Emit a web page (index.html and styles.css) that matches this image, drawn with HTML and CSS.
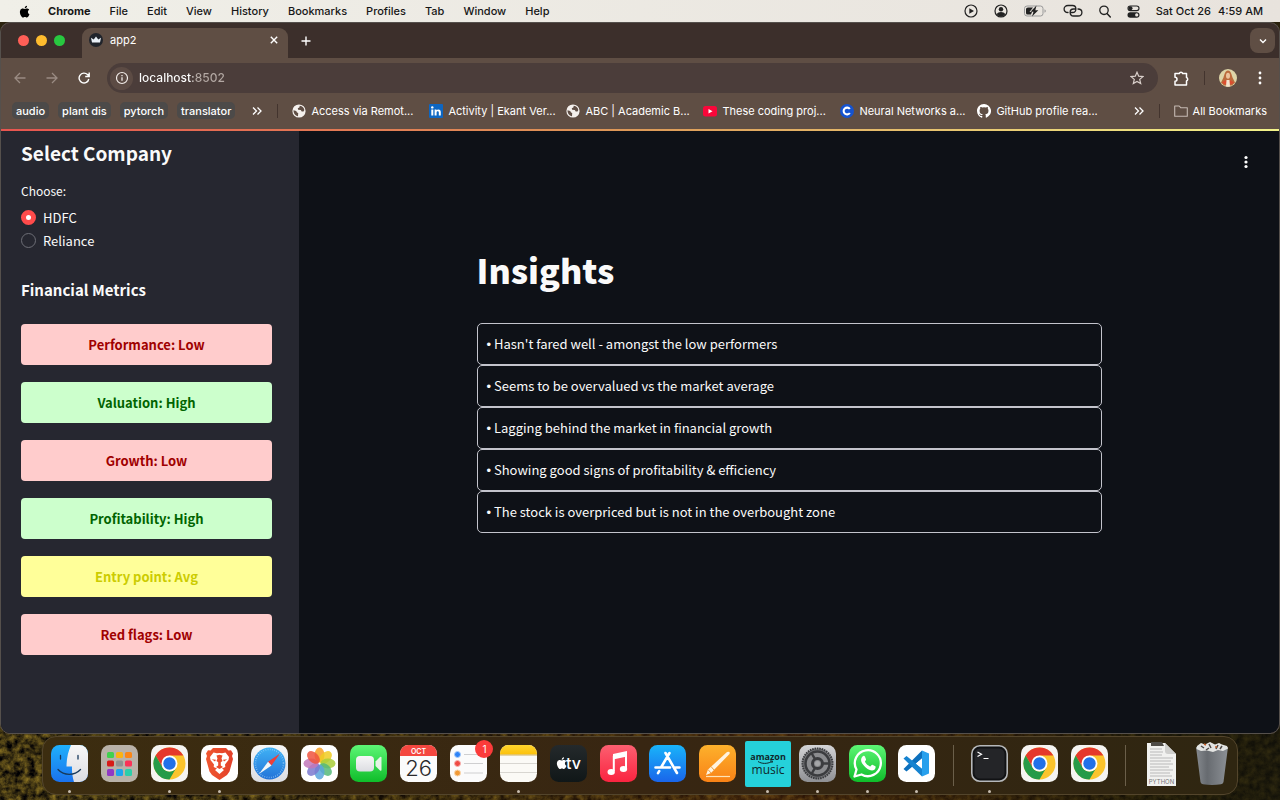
FILE: index.html
```html
<!DOCTYPE html>
<html lang="en">
<head>
<meta charset="utf-8">
<title>app2</title>
<link rel="stylesheet" href="styles.css">
</head>
<body>
<svg class="defs" width="0" height="0" aria-hidden="true">
  <defs>
    <linearGradient id="gFinder" x1="0" y1="0" x2="0" y2="1"><stop offset="0" stop-color="#1fb0fb"/><stop offset="1" stop-color="#1a72ee"/></linearGradient>
    <linearGradient id="gWhite" x1="0" y1="0" x2="0" y2="1"><stop offset="0" stop-color="#f7f7f7"/><stop offset="1" stop-color="#dcdde2"/></linearGradient>
    <linearGradient id="gBrave" x1="0" y1="0" x2="1" y2="0"><stop offset="0" stop-color="#f0562f"/><stop offset="1" stop-color="#e2402a"/></linearGradient>
    <linearGradient id="gSafari" x1="0" y1="0" x2="0" y2="1"><stop offset="0" stop-color="#3fb2f5"/><stop offset="1" stop-color="#2473d8"/></linearGradient>
    <linearGradient id="gGreen" x1="0" y1="0" x2="0" y2="1"><stop offset="0" stop-color="#5df675"/><stop offset="1" stop-color="#0fbd2a"/></linearGradient>
    <linearGradient id="gMusic" x1="0" y1="0" x2="0" y2="1"><stop offset="0" stop-color="#fc5f70"/><stop offset="1" stop-color="#fa2440"/></linearGradient>
    <linearGradient id="gStore" x1="0" y1="0" x2="0" y2="1"><stop offset="0" stop-color="#19b4fa"/><stop offset="1" stop-color="#1a65ea"/></linearGradient>
    <linearGradient id="gPages" x1="0" y1="0" x2="0" y2="1"><stop offset="0" stop-color="#fdb12c"/><stop offset="1" stop-color="#f98216"/></linearGradient>
    <linearGradient id="gNotes" x1="0" y1="0" x2="0" y2="1"><stop offset="0" stop-color="#ffd52e"/><stop offset="1" stop-color="#fcc10a"/></linearGradient>
    <linearGradient id="gGrey" x1="0" y1="0" x2="0" y2="1"><stop offset="0" stop-color="#d4d4d6"/><stop offset="1" stop-color="#8f9094"/></linearGradient>
    <linearGradient id="gTv" x1="0" y1="0" x2="0" y2="1"><stop offset="0" stop-color="#24292b"/><stop offset="1" stop-color="#101718"/></linearGradient>
    <linearGradient id="gBin" x1="0" y1="0" x2="1" y2="0"><stop offset="0" stop-color="#85898e"/><stop offset=".35" stop-color="#676b70"/><stop offset="1" stop-color="#8c9095"/></linearGradient>
    <linearGradient id="gShade"><stop offset="0" stop-color="#1c1503" stop-opacity="0"/><stop offset=".35" stop-color="#3a2406" stop-opacity=".4"/><stop offset=".6" stop-color="#4c2408" stop-opacity=".6"/><stop offset=".9" stop-color="#1a1606" stop-opacity=".75"/><stop offset="1" stop-color="#15140a" stop-opacity=".8"/></linearGradient>
    <clipPath id="tile"><rect width="37" height="37" rx="8.5"/></clipPath>
    <symbol id="apple" viewBox="0 0 24 24"><path d="M18.7 12.8c0-2.6 2.1-3.9 2.2-4-1.2-1.800-3.100-2-3.700-2-1.600-.2-3.100.9-3.900.9s-2-.9-3.300-.9c-1.700 0-3.300 1-4.200 2.500-1.800 3.100-.5 7.700 1.300 10.200.8 1.200 1.900 2.600 3.200 2.600s1.800-.8 3.300-.8 2 .8 3.300.8c1.400 0 2.300-1.200 3.100-2.500 1-1.400 1.400-2.800 1.400-2.900-.1 0-2.700-1-2.700-3.900zM16.200 5.200c.7-.9 1.200-2 1-3.200-1 0-2.200.7-2.900 1.500-.6.7-1.200 1.900-1 3.100 1.100.1 2.200-.6 2.900-1.400z"/></symbol>
    <symbol id="globe" viewBox="0 0 14 14"><circle cx="7" cy="7" r="6.600" fill="#f4f0ed"/><path d="M1.500 6.300 4.200 7l.8 1.500 1.200.5-.2 3.200C3.300 12 1.500 9.500 1.500 6.300zM7.800 1.800l-.5 1.700-1.500.8.3 1.400 2.700.2.900 1.500 1.800.2.800-1.500c-.2-2.300-1.900-4-4.500-4.300z" fill="#5f4e45"/></symbol>
    <symbol id="chrome" viewBox="0 0 37 37">
      <rect width="37" height="37" rx="8.500" fill="#f5f4f2"/>
      <circle cx="18.500" cy="18.500" r="16" fill="#fbc42d"/>
      <path d="M4.640 10.500A16 16 0 0 1 32.360 10.500H18.500L11.570 22.500z" fill="#e5382c"/>
      <path d="M4.640 10.500A16 16 0 0 0 18.500 34.500L25.430 22.500A8 8 0 0 1 11.570 22.500z" fill="#259b48"/>
      <circle cx="18.500" cy="18.500" r="8" fill="#fff"/><circle cx="18.500" cy="18.500" r="6.200" fill="#2170e8"/>
    </symbol>
    <filter id="leaves" x="0" y="0" width="100%" height="100%" color-interpolation-filters="sRGB"><feTurbulence type="fractalNoise" baseFrequency=".14" numOctaves="4" seed="8"/><feColorMatrix values=".9 0 0 0 -.2  .75 0 0 0 -.17  .2 0 0 0 -.03  0 0 0 0 1"/></filter>
  </defs>
</svg>
<svg class="wallpaper" aria-hidden="true"><rect width="100%" height="100%" filter="url(#leaves)"/><rect width="100%" height="100%" fill="url(#gShade)"/></svg>

<header class="menubar">
  <nav class="menus" aria-label="Menu bar">
    <button class="menu" aria-label="Apple"><svg class="apple"><use href="#apple"/></svg></button>
    <button class="menu app">Chrome</button>
    <button class="menu">File</button>
    <button class="menu">Edit</button>
    <button class="menu">View</button>
    <button class="menu">History</button>
    <button class="menu">Bookmarks</button>
    <button class="menu">Profiles</button>
    <button class="menu">Tab</button>
    <button class="menu">Window</button>
    <button class="menu">Help</button>
  </nav>
  <div class="status">
    <svg width="14" height="14" viewBox="0 0 14 14"><circle cx="7" cy="7" r="6" fill="none" stroke="#222" stroke-width="1.200"/><path d="M5.300 4.200v5.600L10 7z" fill="#222"/></svg>
    <svg width="14" height="14" viewBox="0 0 14 14"><circle cx="7" cy="7" r="6" fill="none" stroke="#222" stroke-width="1.200"/><circle cx="7" cy="5.300" r="2.200" fill="#222"/><path d="M2.700 10.300c1.500-3 7.100-3 8.600 0A6 6 0 0 1 7 13a6 6 0 0 1-4.300-2.700z" fill="#222"/></svg>
    <svg width="23" height="12" viewBox="0 0 23 12"><rect x=".5" y="1" width="18.500" height="10" rx="2.500" fill="none" stroke="#999"/><path d="M4 2.500h5L5.500 7H8l-1 2.500H3.500Q2 9.500 2 8V4q0-1.500 2-1.500z" fill="#222"/><path d="M12.500.5 6.500 6.700h3L8 11.500l6.300-6.200h-3z" fill="#222"/><path d="M20.500 4.300v3.400q1.300-.5 1.300-1.700t-1.300-1.700z" fill="#999"/></svg>
    <svg width="20" height="14" viewBox="0 0 20 14"><path d="M5 8.500C-.2 8.500-.2 1.500 5 1.500h4.500c4.500 0 4.500 7 0 7H8M15 5c5.200 0 5.200 7 0 7h-4.500C6 12 6 5 10.500 5H12" fill="none" stroke="#222" stroke-width="1.300" stroke-linecap="round"/></svg>
    <svg width="12" height="13" viewBox="0 0 12 13"><circle cx="5" cy="5.300" r="4.200" fill="none" stroke="#222" stroke-width="1.300"/><path d="m8 8.500 3.300 3.500" stroke="#222" stroke-width="1.500" stroke-linecap="round"/></svg>
    <svg width="13" height="13" viewBox="0 0 13 13"><rect x="1" y="1" width="11" height="4.600" rx="2.300" fill="none" stroke="#222" stroke-width="1.100"/><circle cx="3.500" cy="3.300" r="2" fill="#222"/><rect x=".5" y="7.200" width="12" height="5.500" rx="2.700" fill="#222"/><circle cx="9.700" cy="9.950" r="1.600" fill="#eae5df"/></svg>
    <time class="clock"><span>Sat Oct 26</span><span>4:59 AM</span></time>
  </div>
</header>

<section class="window">
  <div class="tabstrip">
    <div class="lights"><button class="light red" aria-label="Close"></button><button class="light amber" aria-label="Minimize"></button><button class="light green" aria-label="Zoom"></button></div>
    <div class="tab">
      <svg width="14" height="14" viewBox="0 0 14 14"><circle cx="7" cy="7" r="7" fill="#20242b"/><path d="m2 4.800 2.700 1.700L7 3.500l2.300 3L12 4.800l-1 4.700H3z" fill="#e9f0f7"/></svg>
      <span class="tab-title">app2</span>
      <button class="icon-btn" aria-label="Close tab"><svg width="10" height="10" viewBox="0 0 10 10"><path d="m1.800 1.800 6.400 6.400M8.200 1.800 1.800 8.200" stroke="#fff" stroke-width="1.400"/></svg></button>
    </div>
    <button class="icon-btn newtab" aria-label="New tab"><svg width="10" height="10" viewBox="0 0 10 10"><path d="M5 .5v9M.5 5h9" stroke="#fff" stroke-width="1.400"/></svg></button>
    <button class="icon-btn tabsearch" aria-label="Search tabs"><svg width="10" height="10" viewBox="0 0 10 10"><path d="m2 3.500 3 3 3-3" fill="none" stroke="#fff" stroke-width="1.400"/></svg></button>
  </div>
  <div class="toolbar">
    <button class="icon-btn" aria-label="Back"><svg width="12" height="12" viewBox="0 0 12 12"><path d="M11.500 6H1M6 1 1 6l5 5" fill="none" stroke="#9a8b83" stroke-width="1.300"/></svg></button>
    <button class="icon-btn" aria-label="Forward"><svg width="12" height="12" viewBox="0 0 12 12"><path d="M.5 6H11M6 1l5 5-5 5" fill="none" stroke="#9a8b83" stroke-width="1.300"/></svg></button>
    <button class="icon-btn" aria-label="Reload"><svg width="12" height="12" viewBox="0 0 12 12"><path d="M10.800 7A4.900 4.900 0 1 1 9.500 2.600L11 4.100M11.200.5v4H7.200" fill="none" stroke="#fff" stroke-width="1.400"/></svg></button>
    <div class="omnibox">
      <button class="icon-btn info" aria-label="Site information"><svg width="14" height="14" viewBox="0 0 14 14"><circle cx="7" cy="7" r="5.500" fill="none" stroke="#f2ece8" stroke-width="1.200"/><path d="M7 6.300v3.500M7 4v1.300" stroke="#f2ece8" stroke-width="1.300"/></svg></button>
      <input class="url" type="text" value="localhost:8502" aria-label="Address">
      <button class="icon-btn" aria-label="Bookmark this page"><svg width="14" height="14" viewBox="0 0 14 14"><path d="m7 1.200 1.700 4 4.200.4-3.200 2.800 1 4.200L7 10.400l-3.700 2.200 1-4.200L1.100 5.600l4.200-.4z" fill="none" stroke="#d9cfca" stroke-width="1.200"/></svg></button>
    </div>
    <div class="actions">
      <button class="icon-btn" aria-label="Extensions"><svg width="17" height="17" viewBox="0 0 17 17"><path d="M2 3.500h4.300a1.800 1.800 0 0 1 3.400 0h3.800v4a1.800 1.800 0 0 1 0 3.400v4H2v-3.700a2 2 0 0 0 0-4z" fill="none" stroke="#fff" stroke-width="1.500" stroke-linejoin="round"/></svg></button>
      <i class="divider"></i>
      <button class="icon-btn profile" aria-label="Profile"><svg width="18" height="18" viewBox="0 0 18 18"><circle cx="9" cy="9" r="9" fill="#ded5a8"/><path d="M9 1.500c-3 0-3.500 4-4.500 7L2 13.500l3 3h8l3-3-2.500-5c-1-3-1.500-7-4.500-7z" fill="#bb6b3c"/><path d="M3 13.500 7 11l2 2.500L11 11l4 2.500a9 9 0 0 1-12 0z" fill="#dc4c30"/><ellipse cx="9" cy="6.800" rx="2" ry="3" fill="#ecc39c"/><path d="M7.500 11h3l.5 6.500H7z" fill="#f3e3ce"/></svg></button>
      <button class="icon-btn" aria-label="Chrome menu"><svg width="4" height="14" viewBox="0 0 4 14" fill="#fff"><circle cx="2" cy="2" r="1.400"/><circle cx="2" cy="7" r="1.400"/><circle cx="2" cy="12" r="1.400"/></svg></button>
    </div>
  </div>
  <nav class="bookmarks" aria-label="Bookmarks">
    <div class="groups"><button class="chip">audio</button><button class="chip">plant dis</button><button class="chip">pytorch</button><button class="chip">translator</button></div>
    <button class="icon-btn more" aria-label="More groups"><svg width="10" height="10" viewBox="0 0 10 10"><path d="m1 1.500 3.500 3.500L1 8.500M5.500 1.500 9 5 5.500 8.500" fill="none" stroke="#fff" stroke-width="1.300"/></svg></button>
    <i class="divider"></i>
    <div class="links">
      <a class="link" href="#"><svg><use href="#globe"/></svg>Access via Remot...</a>
      <a class="link" href="#"><svg viewBox="0 0 14 14"><rect width="14" height="14" rx="1" fill="#0d66c2"/><path d="M2.300 5.500h2v6h-2zM5.600 5.500h1.900v.8c1-1.500 4.300-1.300 4.300 1.700v3.500h-2V8.300c0-1.500-2.200-1.500-2.200 0v3.200h-2z" fill="#fff"/><circle cx="3.300" cy="3.400" r="1.200" fill="#fff"/></svg>Activity | Ekant Ver...</a>
      <a class="link" href="#"><svg><use href="#globe"/></svg>ABC | Academic B...</a>
      <a class="link" href="#"><svg viewBox="0 0 14 14"><rect y="2" width="14" height="10.500" rx="2.500" fill="#f8073a"/><path d="M5.500 5v4.500l4-2.250z" fill="#fff"/></svg>These coding proj...</a>
      <a class="link" href="#"><svg viewBox="0 0 14 14"><circle cx="7" cy="7" r="7" fill="#1553cf"/><path d="M9.800 9A3.400 3.400 0 1 1 9.800 5" fill="none" stroke="#fff" stroke-width="2.100"/></svg>Neural Networks a...</a>
      <a class="link" href="#"><svg viewBox="0 0 16 16"><path fill="#fff" d="M8 0C3.580 0 0 3.580 0 8c0 3.540 2.290 6.530 5.470 7.590.4.070.55-.17.55-.38v-1.490c-2.010.37-2.530-.49-2.690-.94-.09-.23-.48-.94-.82-1.130-.28-.15-.68-.52-.01-.53.630-.01 1.080.58 1.230.82.720 1.210 1.870.87 2.330.66.070-.52.280-.87.510-1.070-1.780-.2-3.640-.89-3.640-3.950 0-.87.310-1.590.82-2.150-.08-.2-.36-1.020.08-2.120 0 0 .670-.21 2.200.82a7.400 7.400 0 0 1 4 0c1.530-1.040 2.200-.82 2.200-.82.440 1.100.160 1.920.080 2.120.510.560.820 1.270.820 2.150 0 3.070-1.870 3.750-3.650 3.950.290.250.540.730.540 1.480v2.200c0 .21.150.46.550.38A8 8 0 0 0 8 0z"/></svg>GitHub profile rea...</a>
    </div>
    <button class="icon-btn more" aria-label="More bookmarks"><svg width="10" height="10" viewBox="0 0 10 10"><path d="m1 1.500 3.500 3.500L1 8.500M5.500 1.500 9 5 5.500 8.500" fill="none" stroke="#fff" stroke-width="1.300"/></svg></button>
    <i class="divider"></i>
    <a class="link all" href="#"><svg viewBox="0 0 14 14"><path d="M.7 2h4.500l1.500 1.700h6.600V12.300H.7z" fill="none" stroke="#c5b9b2" stroke-width="1.100" stroke-linejoin="round"/></svg>All Bookmarks</a>
  </nav>
  <div class="decoration"></div>
  <div class="page">
    <aside class="sidebar">
      <h2 class="side-title">Select Company</h2>
      <fieldset class="choices">
        <legend>Choose:</legend>
        <label class="choice"><input type="radio" name="company" checked>HDFC</label>
        <label class="choice"><input type="radio" name="company">Reliance</label>
      </fieldset>
      <h3 class="metrics-title">Financial Metrics</h3>
      <div class="metrics">
        <div class="metric low">Performance: Low</div>
        <div class="metric high">Valuation: High</div>
        <div class="metric low">Growth: Low</div>
        <div class="metric high">Profitability: High</div>
        <div class="metric avg">Entry point: Avg</div>
        <div class="metric low">Red flags: Low</div>
      </div>
    </aside>
    <main class="main">
      <div class="app-header"><button class="icon-btn" aria-label="App menu"><svg width="4" height="14" viewBox="0 0 4 14" fill="#fff"><circle cx="2" cy="2.500" r="1.600"/><circle cx="2" cy="7" r="1.600"/><circle cx="2" cy="11.500" r="1.600"/></svg></button></div>
      <div class="content">
        <h1 class="title">Insights</h1>
        <div class="insight"><span class="bullet">•</span> Hasn't fared well - amongst the low performers</div>
        <div class="insight"><span class="bullet">•</span> Seems to be overvalued vs the market average</div>
        <div class="insight"><span class="bullet">•</span> Lagging behind the market in financial growth</div>
        <div class="insight"><span class="bullet">•</span> Showing good signs of profitability &amp; efficiency</div>
        <div class="insight"><span class="bullet">•</span> The stock is overpriced but is not in the overbought zone</div>
      </div>
    </main>
  </div>
</section>

<footer class="dock-area">
  <nav class="dock" aria-label="Dock">
    <button class="slot running" aria-label="Finder"><svg viewBox="0 0 37 37"><g clip-path="url(#tile)"><rect width="37" height="37" fill="url(#gFinder)"/><path d="M20 0C17 7 15.500 14 15.500 21.500h5.500c-.2 5 .3 10 2 15.500h14V0z" fill="url(#gWhite)"/></g><path d="M9.500 10.500v3.500M27 10.500v3.500" stroke="#173a5c" stroke-width="1.300" stroke-linecap="round"/><path d="M7 24.500c6 6.500 16.500 6.500 22.500 0" fill="none" stroke="#173a5c" stroke-width="1.300" stroke-linecap="round"/></svg></button>
    <button class="slot" aria-label="Launchpad"><svg viewBox="0 0 37 37"><rect width="37" height="37" rx="8.500" fill="#b9b2a9"/><rect x="6" y="7" width="7" height="6" rx="1.500" fill="#40d14e"/><rect x="15" y="7" width="7" height="6" rx="1.500" fill="#fbb312"/><rect x="24" y="7" width="7" height="6" rx="1.500" fill="#fb8616"/><rect x="6" y="15.500" width="7" height="6" rx="1.500" fill="#d71a17"/><rect x="15" y="15.500" width="7" height="6" rx="1.500" fill="#919191"/><rect x="24" y="15.500" width="7" height="6" rx="1.500" fill="#fb3157"/><rect x="6" y="24" width="7" height="7" rx="1.500" fill="#9139c5"/><rect x="15" y="24" width="7" height="7" rx="1.500" fill="#1fa4ed"/><rect x="24" y="24" width="7" height="7" rx="1.500" fill="#2dceaa"/></svg></button>
    <button class="slot running" aria-label="Chrome"><svg><use href="#chrome"/></svg></button>
    <button class="slot running" aria-label="Brave"><svg viewBox="0 0 37 37"><rect width="37" height="37" rx="8.500" fill="#fff"/><path d="m12 3h13l2.500 2.500 2.500-.3 2 3.300-1 2.500 1 3-3.500 12.500-2.500 3.500-7.500 5-7.500-5-2.500-3.500L5 14l1-3-1-2.500 2-3.300 2.500.3z" fill="url(#gBrave)"/><path d="M12.500 7.500 16 8.300q2.500-.8 5 0l3.500-.8 3.500 4.500-.5 3-3.500 4.500.3 2.500-3.300 1.500 2 1.500-4.500 4-4.500-4 2-1.500-3.300-1.500.3-2.500L9.500 15 9 12z" fill="#fff"/><path d="m15.500 10.500 3-.7 3 .7-1 3 1 2.500-1.700 1.200v3.300l2.200 1.500-3.500 2-3.500-2 2.200-1.500v-3.300L15.500 16l1-2.500zM10.800 14.300l4.200.4-1 1.800zM26.200 14.300l-4.200.4 1 1.800z" fill="#e94b2c"/></svg></button>
    <button class="slot" aria-label="Safari"><svg viewBox="0 0 37 37"><rect width="37" height="37" rx="8.500" fill="url(#gWhite)"/><circle cx="18.500" cy="18.500" r="16" fill="url(#gSafari)"/><circle cx="18.500" cy="18.500" r="14" fill="none" stroke="#a8d7fa" stroke-width="1.500" stroke-dasharray=".5 1.700"/><path d="m29 8.500-12 8.300 3.500 3.700z" fill="#ee3f38"/><path d="M8 29l9-12.200 3.500 3.700z" fill="#f4f6f8"/></svg></button>
    <button class="slot" aria-label="Photos"><svg viewBox="0 0 37 37"><rect width="37" height="37" rx="8.500" fill="#fff"/><g fill-opacity=".85"><ellipse cx="18.500" cy="10" rx="5" ry="7.500" fill="#f8a024"/><ellipse cx="18.500" cy="10" rx="5" ry="7.500" fill="#f0cb22" transform="rotate(45 18.500 18.500)"/><ellipse cx="18.500" cy="10" rx="5" ry="7.500" fill="#a9ce38" transform="rotate(90 18.500 18.500)"/><ellipse cx="18.500" cy="10" rx="5" ry="7.500" fill="#55b979" transform="rotate(135 18.500 18.500)"/><ellipse cx="18.500" cy="10" rx="5" ry="7.500" fill="#5aa4dc" transform="rotate(180 18.500 18.500)"/><ellipse cx="18.500" cy="10" rx="5" ry="7.500" fill="#7b79cf" transform="rotate(225 18.500 18.500)"/><ellipse cx="18.500" cy="10" rx="5" ry="7.500" fill="#c277ba" transform="rotate(270 18.500 18.500)"/><ellipse cx="18.500" cy="10" rx="5" ry="7.500" fill="#f0543e" transform="rotate(315 18.500 18.500)"/></g></svg></button>
    <button class="slot" aria-label="FaceTime"><svg viewBox="0 0 37 37"><rect width="37" height="37" rx="8.500" fill="url(#gGreen)"/><rect x="6" y="11" width="18" height="15.500" rx="4" fill="url(#gWhite)"/><path d="M25.500 16.500 30 12q1.500-1 1.500.8v12q0 1.700-1.500.7l-4.500-4.500z" fill="#e6f3e6"/></svg></button>
    <button class="slot" aria-label="Calendar"><svg viewBox="0 0 37 37"><g clip-path="url(#tile)"><rect width="37" height="37" fill="#fbfbfb"/><rect width="37" height="11" fill="#f4473f"/></g><text x="18.500" y="8.800" text-anchor="middle" font-size="7" font-weight="600" fill="#fff">OCT</text><text x="18.500" y="31" text-anchor="middle" font-size="22" font-weight="300" fill="#2a2a2c">26</text></svg></button>
    <button class="slot" aria-label="Reminders, 1 notification"><svg viewBox="0 0 37 37"><rect width="37" height="37" rx="8.500" fill="#fbfbfb"/><path d="M14 9.500h19M14 18.500h19M14 28h19" stroke="#c9c9cb" stroke-width=".9"/><circle cx="7.500" cy="9.500" r="3" fill="#2d83f7" stroke="#a9ccfb" stroke-width="1"/><circle cx="7.500" cy="18.500" r="3" fill="#ef4b44" stroke="#f8b5b2" stroke-width="1"/><circle cx="7.500" cy="28" r="3" fill="#f19a37" stroke="#fad6ac" stroke-width="1"/></svg><span class="badge">1</span></button>
    <button class="slot running" aria-label="Notes"><svg viewBox="0 0 37 37"><g clip-path="url(#tile)"><rect width="37" height="37" fill="#fbfaf6"/><rect width="37" height="9.500" fill="url(#gNotes)"/><path d="M0 10h37" stroke="#c49e3a" stroke-width=".8"/><path d="M0 18.500h37M0 27.500h37" stroke="#cfcdc8" stroke-width=".8"/></g></svg></button>
    <button class="slot" aria-label="TV"><svg viewBox="0 0 37 37"><rect width="37" height="37" rx="8.500" fill="url(#gTv)"/><use href="#apple" x="4" y="11" width="14" height="14" fill="#fff"/><text x="16" y="24" font-size="16" font-weight="500" fill="#fff">tv</text></svg></button>
    <button class="slot" aria-label="Music"><svg viewBox="0 0 37 37"><rect width="37" height="37" rx="8.500" fill="url(#gMusic)"/><path d="M13.800 26V11.500L26 9v14" fill="none" stroke="#fff" stroke-width="2"/><path d="M13 9 27 6v5.500L13 14.500z" fill="#fff"/><ellipse cx="11.200" cy="27" rx="3.700" ry="3" fill="#fff"/><ellipse cx="23.500" cy="24" rx="3.700" ry="3" fill="#fff"/></svg></button>
    <button class="slot" aria-label="App Store"><svg viewBox="0 0 37 37"><rect width="37" height="37" rx="8.500" fill="url(#gStore)"/><g stroke="#fff" stroke-width="2.600" stroke-linecap="round"><path d="M20.500 8 12 22.500M16.500 8 28 28M6.500 22.500h14.500M26.500 22.500h4M10.200 26.200 9 28.200"/></g></svg></button>
    <button class="slot" aria-label="Pages"><svg viewBox="0 0 37 37"><rect width="37" height="37" rx="8.500" fill="url(#gPages)"/><path d="m7 30 2-5.500L28 7q3.500-1 2.500 2L12 28z" fill="#fff3df"/><path d="m9 24.500 3 3.500M12 21.500l3 3.500" stroke="#dc8b27" stroke-width=".8"/><path d="M7 31.500h24" stroke="#ffe3b5" stroke-width="1.200"/></svg></button>
    <button class="slot running wide" aria-label="Amazon Music"><svg class="amazon" viewBox="0 0 46 46"><rect width="46" height="46" rx="2" fill="#25d1da"/><text x="23" y="19" text-anchor="middle" font-size="9" font-weight="700" fill="#10282c">amazon</text><path d="M13 20.500c4 2.500 9 2.500 13.500.2M25 20h2.500l-.7 2" fill="none" stroke="#10282c" stroke-width="1"/><text x="23" y="33" text-anchor="middle" font-size="12" fill="#10282c">music</text></svg></button>
    <button class="slot running" aria-label="System Settings"><svg viewBox="0 0 37 37"><rect width="37" height="37" rx="8.500" fill="url(#gGrey)"/><circle cx="18.500" cy="18.500" r="15" fill="#77787b" stroke="#3b3c3f" stroke-width="2" stroke-dasharray="1.600 .8"/><circle cx="18.500" cy="18.500" r="12" fill="#8b8c8f" stroke="#3b3c3f" stroke-width="2.500"/><circle cx="18.500" cy="18.500" r="5" fill="none" stroke="#3b3c3f" stroke-width="3"/><path d="M23 18.500h8M16.200 14.500l-4-7M16.200 22.500l-4 7" stroke="#3b3c3f" stroke-width="2.500"/><circle cx="18.500" cy="18.500" r="2.500" fill="#a5a6a8"/></svg></button>
    <button class="slot running" aria-label="WhatsApp"><svg viewBox="0 0 37 37"><rect width="37" height="37" rx="8.500" fill="url(#gGreen)"/><path d="m5.500 31.500 2-7A13 13 0 1 1 12.500 29.500z" fill="none" stroke="#fff" stroke-width="2.300" stroke-linejoin="round"/><path d="M13.500 11.500c1-1 2-.8 2.500.2l1 2.500c.3.700-1.200 2-1 2.500 1.200 2.400 2.700 3.700 5 4.700.7.300 1.700-2 2.500-1.600l2.800 1.400c.9.500 0 3-1.300 3.800-2 1.100-5 .2-8-2.300-3-2.600-4.900-5.400-4.900-7.700 0-1.500.6-2.800 1.400-3.500z" fill="#fff"/></svg></button>
    <button class="slot running" aria-label="Visual Studio Code"><svg viewBox="0 0 37 37"><rect width="37" height="37" rx="8.500" fill="#fff"/><path d="m24 5.500 7 3v20l-7 3z" fill="#27a0ed"/><path d="m24 5.500v8L8.500 26.500 5.500 24z" fill="#0c70bd"/><path d="M5.500 13.500l3-2.500L24 23.500v8z" fill="#1683d0"/><path d="M24 13.500 18 18.500l6 5z" fill="#fff"/></svg></button>
    <i class="dock-sep"></i>
    <button class="slot running" aria-label="Terminal"><svg viewBox="0 0 37 37"><rect x=".8" y=".8" width="35.400" height="35.400" rx="8" fill="#111214" stroke="#b6b8ba" stroke-width="1.600"/><rect x="3.500" y="3.500" width="30" height="30" rx="5.500" fill="#242528"/><path d="m6.500 7 4 2.300-4 2.300M12.500 13.500h5" fill="none" stroke="#fff" stroke-width="1.200"/></svg></button>
    <button class="slot" aria-label="Chrome window"><svg><use href="#chrome"/></svg></button>
    <button class="slot" aria-label="Chrome window"><svg><use href="#chrome"/></svg></button>
    <i class="dock-sep"></i>
    <button class="slot wide" aria-label="Python file"><svg viewBox="0 0 46 46"><path d="M8 2h18l11 11v32H8z" fill="#f1f1ef"/><path d="M12 1h11l2 4H12z" fill="#4e4b46"/><path d="M26 2v8q0 3 3 3h8z" fill="#cfcfcd"/><path d="M11 8h12M11 11h13M11 14h12M11 17h23M11 20h21M11 23h23M11 26h19M11 29h23M11 32h20M11 35h22" stroke="#b9b9b9" stroke-width="1"/><text x="22.500" y="42.500" text-anchor="middle" font-size="6" fill="#777">PYTHON</text></svg></button>
    <button class="slot wide" aria-label="Trash"><svg viewBox="0 0 46 46"><path d="m7 6 4.500 35q.3 2 2.500 2.300 9 1.500 18 0 2.200-.3 2.500-2.300L39 6z" fill="url(#gBin)"/><path d="m8 5 4-3 4 1.500L21 1l5 2.500L30 2l3 1.500L38 5l1 2.500-5 2.500-5-1-5 2-6-1.500-6 .5-4.500-2z" fill="#e4e5e3"/><path d="m12 5 3 2M20 3l2 4M29 4l-2 4M33 5l-2 3M17 9l3-2" stroke="#4f4a47" stroke-width="1.500"/><path d="m15 3 2 1M26 6h2" stroke="#c5622e" stroke-width="1.500"/></svg></button>
  </nav>
</footer>
</body>
</html>
```

FILE: styles.css
```css
* { box-sizing: border-box; }

:root {
  --ui: Inter, "Liberation Sans", sans-serif;
  --app: "Noto Sans CJK SC", "Noto Sans", sans-serif;
}

body {
  margin: 0;
  min-height: 100vh;
  display: flex;
  flex-direction: column;
  background: #2b220d;
  color: #fff;
  font-family: var(--ui);
  font-size: 11px;
}

button {
  border: 0;
  padding: 0;
  background: none;
  color: inherit;
  font: inherit;
}

svg { display: block; flex: none; }
.defs { position: absolute; }

.wallpaper {
  position: absolute;
  inset: auto 0 0 0;
  z-index: -1;
  width: 100%;
  height: 80px;
}

.icon-btn {
  display: flex;
  align-items: center;
  justify-content: center;
  flex: none;
}

/* Menu bar */
.menubar {
  display: flex;
  justify-content: space-between;
  align-items: center;
  height: 22px;
  padding: 0 17px;
  background: linear-gradient(90deg, #f0efe8, #e8e3dd);
  color: #161616;
  font-size: 11px;
  font-weight: 500;
  line-height: 20px;
}
.menus { display: flex; align-items: center; gap: 19px; }
.menu { white-space: nowrap; }
.app { margin-left: -2px; font-weight: 700; }
.apple { width: 14px; height: 15px; }
.status { display: flex; align-items: center; gap: 16px; }
.clock { display: flex; gap: 7px; white-space: nowrap; }

/* Browser window */
.window {
  flex: 1;
  display: flex;
  flex-direction: column;
  overflow: hidden;
  border: 1px solid #55504c;
  border-radius: 10px;
  background: #5f4e44;
}
.tabstrip {
  display: flex;
  align-items: center;
  height: 35px;
  padding: 0 4px 0 17px;
  background: #3c2f2b;
}
.lights { display: flex; gap: 7px; width: 64px; }
.light { width: 11px; height: 11px; border-radius: 50%; }
.red { background: #ff5f57; }
.amber { background: #febc2e; }
.green { background: #28c840; }
.tab {
  display: flex;
  align-items: center;
  gap: 7px;
  width: 206px;
  height: 30px;
  margin-top: 5px;
  padding: 0 9px 6px 7px;
  border-radius: 9px 9px 0 0;
  background: #5f4e44;
}
.tab-title { flex: 1; }
.newtab { margin-left: 13px; }
.tabsearch {
  width: 25px;
  height: 25px;
  margin-left: auto;
  border-radius: 8px;
  background: #5f4e44;
}
.toolbar {
  display: flex;
  align-items: center;
  gap: 20px;
  height: 40px;
  padding: 0 17px 0 13px;
}
.omnibox {
  flex: 1;
  display: flex;
  align-items: center;
  gap: 6px;
  height: 30px;
  margin-left: -3px;
  padding: 0 14px 0 3px;
  border-radius: 15px;
  background: #4b3d3a;
}
.info {
  width: 23px;
  height: 23px;
  border-radius: 50%;
  background: #5c4b44;
}
.url {
  flex: 1;
  min-width: 0;
  border: 0;
  padding: 0;
  outline: 0;
  background: linear-gradient(90deg, #fff 54px, #b3a8a3 54px);
  background-clip: text;
  color: transparent;
  font: 500 12px/18px var(--ui);
}
.actions { display: flex; align-items: center; gap: 14px; margin-left: -5px; }
.profile { margin-right: 7px; }
.divider { flex: none; width: 1px; height: 14px; background: #43342e; }

.bookmarks {
  display: flex;
  align-items: center;
  height: 31px;
  padding: 0 12px 6px 11px;
}
.groups { display: flex; gap: 9px; }
.chip {
  height: 17px;
  padding: 0 4px;
  border-radius: 5px;
  background: #4c4a49;
  font-weight: 500;
  white-space: nowrap;
}
.more { margin: 0 15px 0 17px; }
.links { flex: 1; display: flex; padding-left: 14px; }
.link {
  display: flex;
  align-items: center;
  gap: 5px;
  width: 137px;
  color: #fff;
  text-decoration: none;
  white-space: nowrap;
}
.link svg { width: 14px; height: 14px; }
.all { width: auto; margin-left: 14px; }

.decoration { height: 2px; background: linear-gradient(90deg, #e85550, #dd9a58 50%, #f2f38a); }

/* App page */
.page {
  flex: 1;
  display: flex;
  background: #0e1117;
  color: #fafafa;
  font-family: var(--app);
}
.sidebar {
  flex: none;
  width: 298px;
  padding: 8px 27px 24px 20px;
  background: #262730;
}
.side-title { margin: 0 0 14px; font-size: 19px; font-weight: 700; line-height: 28px; }
.choices { margin: 0; border: 0; padding: 0; }
.choices legend { padding: 0 0 5px; font-size: 12px; line-height: 20px; }
.choice {
  display: flex;
  align-items: center;
  gap: 7px;
  font-size: 13px;
  line-height: 23px;
}
.choice input {
  appearance: none;
  width: 15px;
  height: 15px;
  margin: 0;
  border: 1px solid #6d6e76;
  border-radius: 50%;
}
.choice input:checked { border: 5px solid #ff4b4b; background: #fff; }
.metrics-title { margin: 24px 0 20px; font-size: 15px; font-weight: 700; line-height: 28px; }
.metrics { display: grid; gap: 17px; }
.metric {
  padding: 9px;
  border-radius: 4px;
  font-size: 13px;
  font-weight: 700;
  line-height: 23px;
  text-align: center;
}
.low { background: #ffcccc; color: #a00000; }
.high { background: #ccffcc; color: #006400; }
.avg { background: #ffff99; color: #cccc00; }

.main { flex: 1; }
.app-header { display: flex; justify-content: flex-end; padding: 24px 31px; }
.content { max-width: 625px; margin: 0 auto; padding: 53px 0 40px; }
.title { margin: 0 0 29px; font-size: 34px; font-weight: 900; line-height: 48px; }
.insight {
  padding: 9px;
  border: 1px solid #c3c4cc;
  border-radius: 5px;
  font-size: 13px;
  line-height: 22px;
}
.bullet { font-family: "Liberation Sans", sans-serif; line-height: 1; }

/* Dock */
.dock-area { padding: 2px 42px 5px; }
.dock {
  display: flex;
  height: 59px;
  padding: 0 0 0 2px;
  border: 1px solid #53452c;
  border-radius: 14px;
  background: linear-gradient(90deg, #3c2d10, #382612 50%, #2f2611);
}
.slot {
  position: relative;
  flex: 1;
  display: flex;
  align-items: center;
  justify-content: center;
  padding-bottom: 4px;
}
.slot svg { width: 37px; height: 37px; }
.wide svg { width: 46px; height: 46px; }
.amazon { font-family: "Open Sans", sans-serif; }
.running::after {
  content: "";
  position: absolute;
  bottom: 1px;
  width: 3px;
  height: 3px;
  border-radius: 50%;
  background: #c9beb0;
}
.badge {
  position: absolute;
  top: 3px;
  right: 0;
  width: 18px;
  height: 18px;
  border-radius: 50%;
  background: #fb3b3a;
  font-size: 10px;
  line-height: 18px;
}
.dock-sep { flex: none; width: 1px; margin: 8px 11px; background: #6b5f4a; }
```
